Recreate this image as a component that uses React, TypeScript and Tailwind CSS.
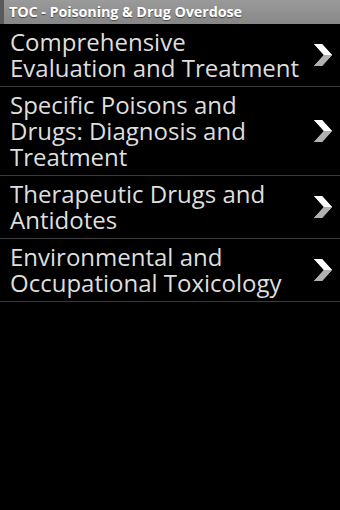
const items = [
  'Comprehensive Evaluation and Treatment',
  'Specific Poisons and Drugs: Diagnosis and Treatment',
  'Therapeutic Drugs and Antidotes',
  'Environmental and Occupational Toxicology',
]

function Chevron() {
  return (
    <svg width="20" height="24" viewBox="0 0 20 24" className="shrink-0">
      <path d="M1 1 L9 1 L19 12 L9 23 L1 23 L11 12 Z" fill="#e6e6e6" />
      <path d="M9 1 L19 12 L11 12 L1 1 Z" fill="#ffffff" />
      <path d="M11 12 L19 12 L9 23 L1 23 Z" fill="#b0b0b0" />
    </svg>
  )
}

export default function App() {
  return (
    <div className="h-[510px] w-[340px] bg-black font-['Open_Sans','Noto_Sans',sans-serif]">
      <div className="flex h-6 items-center border-l-4 border-[#5a5a5a] bg-gradient-to-b from-[#9a9a9a] to-[#878787] pl-[5px]">
        <span className="text-[14.4px] font-bold tracking-[-0.1px] text-white [text-shadow:0_1px_1px_rgba(0,0,0,0.5)]">
          TOC - Poisoning &amp; Drug Overdose
        </span>
      </div>
      <ul>
        {items.map((item) => (
          <li
            key={item}
            className="flex items-center gap-2 border-b border-[#3a3a3a] py-[5px] pr-[7px] pl-[10px]"
          >
            <span className="flex-1 text-[24px] leading-[26px] text-[#dedede]">{item}</span>
            <Chevron />
          </li>
        ))}
      </ul>
    </div>
  )
}
